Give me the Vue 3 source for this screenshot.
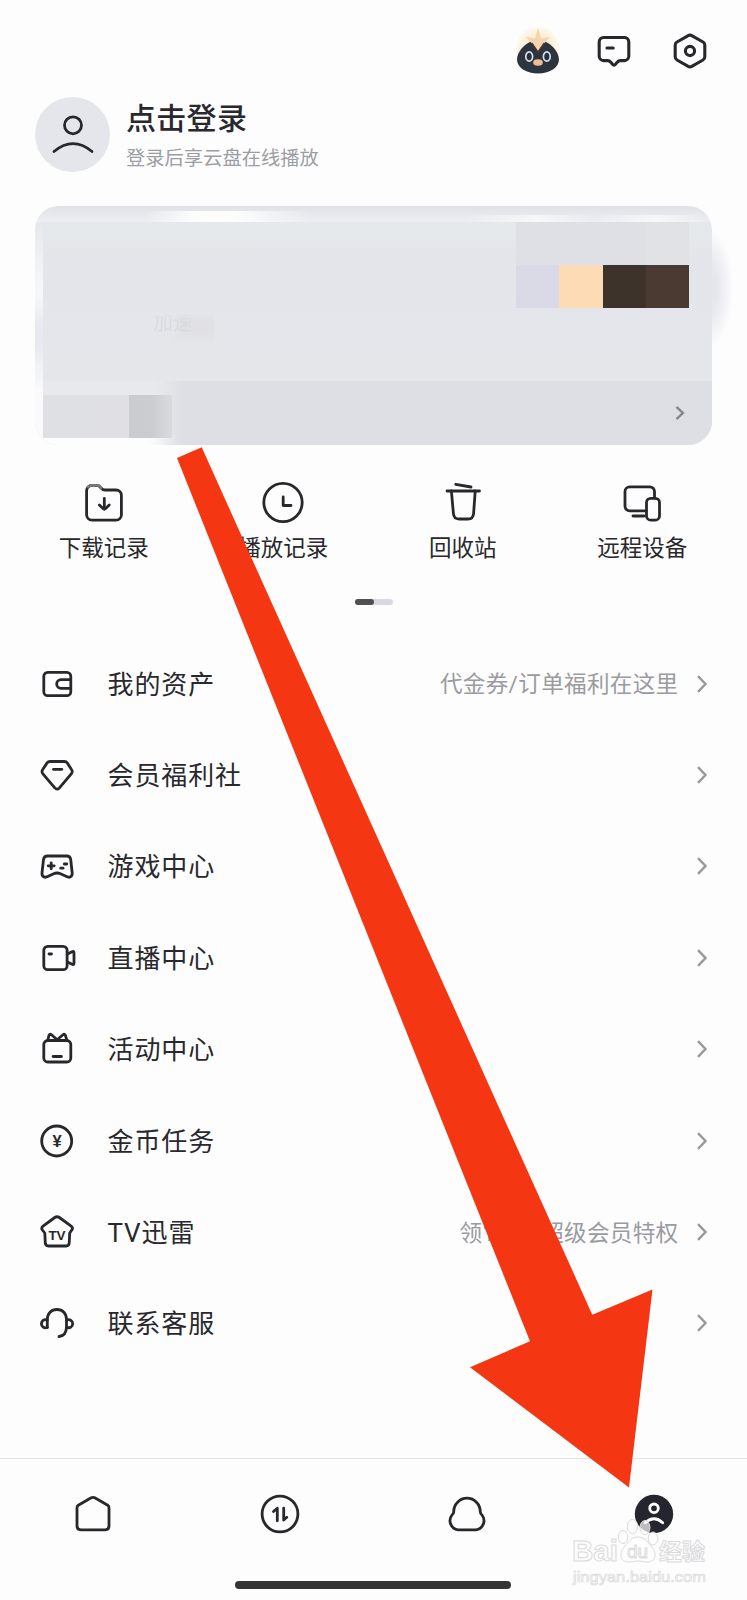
<!--
  个人中心页面
  结构：顶部工具栏 / 登录信息 / 会员卡片 / 快捷入口 / 菜单列表 / 底部导航
  所有图标的坐标原点都在图标中心，线条数据统一放在 icons 里
-->
<template>
  <div class="page">
    <!-- 顶部工具栏 -->
    <header class="toolbar">
      <svg class="penguin" viewBox="-24 -26 48 52">
        <defs>
          <radialGradient id="halo">
            <stop offset=".7" stop-color="#fcf0d8" />
            <stop offset="1" stop-color="#fdfaf3" />
          </radialGradient>
        </defs>
        <circle cx="0" cy="-2" r="22" fill="url(#halo)" />
        <path d="M-21 8.500C-21 1-13-8-6.500-9.500L0-2 6.500-9.500C13-8 21 1 21 8.500C21 17 11 22.500 0 22.500S-21 17-21 8.500z" fill="#2d343e" />
        <path d="M-12-14L-3-12.500 0-23 3-12.500 12-14 5.500-7 0 0-5.500-7z" fill="#f6d3ac" />
        <path d="M-6-8L0 1 6-8" fill="none" stroke="#4a3d35" stroke-width="1.3" />
        <ellipse cx="-8.800" cy="5.500" rx="3.400" ry="4.600" fill="#26303c" stroke="#d5e0ec" stroke-width="1.700" />
        <ellipse cx="8.800" cy="5.500" rx="3.400" ry="4.600" fill="#26303c" stroke="#d5e0ec" stroke-width="1.700" />
        <ellipse cx="0" cy="11.500" rx="4.800" ry="3.200" fill="#efbd95" />
      </svg>
      <svg class="icon bold" viewBox="-24 -24 48 48"><path v-for="d in icons.chat" :key="d" :d="d" /></svg>
      <svg class="icon bold" viewBox="-24 -24 48 48"><path v-for="d in icons.setting" :key="d" :d="d" /></svg>
    </header>

    <!-- 登录信息 -->
    <section class="profile">
      <div class="avatar">
        <svg class="icon" viewBox="-24 -24 48 48"><path v-for="d in icons.avatar" :key="d" :d="d" /></svg>
      </div>
      <div class="profile-text">
        <h1>点击登录</h1>
        <p>登录后享云盘在线播放</p>
      </div>
    </section>

    <!-- 会员卡片 -->
    <section class="card">
      <div class="card-glow"></div>
      <div class="card-inner">
        <div class="card-main">
          <span class="ghost">加速</span>
          <div class="mosaic">
            <i v-for="c in mosaic" :key="c" :style="{ background: c }"></i>
          </div>
        </div>
        <div class="card-foot">
          <div class="foot-blocks"><i></i><i></i><i></i></div>
          <svg class="chevron" viewBox="0 0 12 18"><path d="M2.500 2.800L8.900 9 2.500 15.200" /></svg>
        </div>
      </div>
    </section>

    <!-- 快捷入口 -->
    <nav class="quick">
      <div v-for="q in quicks" :key="q.label" class="quick-item">
        <svg class="icon" viewBox="-24 -24 48 48">
          <path v-for="d in icons[q.icon]" :key="d" :d="d" />
          <path v-if="q.icon === 'download'" class="faded" d="M-16-16A5 5 0 0 1-12-17.600H-7Q-4.500-17.600-3-15" />
        </svg>
        <span>{{ q.label }}</span>
      </div>
    </nav>
    <div class="pager"><i></i></div>

    <!-- 菜单列表 -->
    <ul class="menu">
      <li v-for="m in menus" :key="m.label">
        <svg class="icon" viewBox="-24 -24 48 48">
          <path v-for="d in icons[m.icon]" :key="d" :d="d" />
          <text v-if="m.mark" x="0" :y="m.markY" :font-size="m.markSize">{{ m.mark }}</text>
        </svg>
        <span class="menu-label">{{ m.label }}</span>
        <span class="menu-tip">{{ m.tip }}</span>
        <svg class="chevron" viewBox="0 0 12 18"><path d="M2 1.200L9.500 9 2 16.800" /></svg>
      </li>
    </ul>

    <!-- 底部导航 -->
    <footer class="tabbar">
      <div v-for="t in tabs" :key="t" class="tab">
        <svg v-if="t !== 'mine'" class="icon" viewBox="-24 -24 48 48">
          <path v-for="d in icons[t]" :key="d" :d="d" />
        </svg>
        <svg v-else class="icon mine" viewBox="-24 -24 48 48">
          <circle r="19.200" />
          <path v-for="d in icons.mine" :key="d" :d="d" />
        </svg>
      </div>
    </footer>
    <div class="home-bar"></div>

    <!-- 指引箭头 -->
    <svg class="arrow" viewBox="0 0 747 1600">
      <path d="M177 458L201.700 447.300 592.300 1314.700 652.500 1289.500 629 1487.500 470 1367.300 530 1341.300z" />
    </svg>

    <!-- 水印 -->
    <svg class="watermark" viewBox="0 0 150 80">
      <g class="paw">
        <path d="M57 25c6 0 9 4 13 9 6 6 6 16-4 16-4 0-6-1-9-1s-5 1-9 1c-10 0-10-10-4-16 4-5 7-9 13-9z" />
        <ellipse cx="42" cy="25" rx="4.800" ry="6.500" />
        <ellipse cx="51.500" cy="14.500" rx="5.200" ry="7" />
        <ellipse cx="64" cy="15.500" rx="5" ry="7" class="toe" />
        <ellipse cx="72" cy="26.500" rx="4.800" ry="6.500" />
      </g>
      <text x="-9" y="48.500" font-size="29" textLength="46" lengthAdjust="spacingAndGlyphs">Bai</text>
      <text x="46" y="46" font-size="19" class="du">du</text>
      <text x="78" y="47.500" font-size="23">经验</text>
      <text x="-8" y="69.500" font-size="15" textLength="133" lengthAdjust="spacingAndGlyphs" class="url">jingyan.baidu.com</text>
    </svg>
  </div>
</template>

<script setup>
// 卡片右上角的色块
const mosaic = ['#d9dae5', '#fddcb5', '#3e332b', '#4b3a32']

// 图标线条
const icons = {
  chat: [
    'M-10.500-13.500H10.500A4.500 4.500 0 0 1 14.800-9V5.200A4.500 4.500 0 0 1 10.500 9.600H6.500Q4.500 9.600 3 11.400L1.500 13.300Q0 15-1.500 13.300L-3 11.400Q-4.500 9.600-6.500 9.600H-10.500A4.500 4.500 0 0 1-14.800 5.200V-9A4.500 4.500 0 0 1-10.500-13.500z',
    'M-7-3H-.8'
  ],
  setting: [
    'M-2.200-15.200Q0-16.600 2.200-15.200L13-9Q14.800-8 14.800-5.800V5.800Q14.800 8 13 9L2.200 15.200Q0 16.600-2.200 15.200L-13 9Q-14.800 8-14.800 5.800V-5.800Q-14.800-8-13-9z',
    'M-4.600 0A4.600 4.600 0 1 1 4.600 0A4.600 4.600 0 1 1-4.600 0z'
  ],
  avatar: ['M-8.500-9.700A8.500 8.500 0 1 1 8.500-9.700A8.500 8.500 0 1 1-8.500-9.700z', 'M-19 16.500Q0 .8 19 16.500'],
  download: [
    'M-12-17.600H-7C-3-17.600-3.500-13 1-13H12A5.400 5.400 0 0 1 17.400-7.600V11.800A5.400 5.400 0 0 1 12 17.200H-12A5.400 5.400 0 0 1-17.400 11.800V-12.200A5.400 5.400 0 0 1-12-17.600z',
    'M.3-4.500V6',
    'M-4.600 2L-1 5.500Q.3 6.600 1.600 5.500L5.200 2'
  ],
  history: ['M-19.200-.5A19.200 19.200 0 1 1 19.200-.5A19.200 19.200 0 1 1-19.200-.5z', 'M.2-6V2.500H8'],
  trash: ['M-7.300-18.700L8-16', 'M-16-12H16.500', 'M-11.600-12L-9.600 10.500Q-9.200 16-4 16H5Q10.200 16 10.600 10.500L12.200-12'],
  device: [
    'M12.500-5V-11.500A4.700 4.700 0 0 0 7.800-16.200H-12.300A4.700 4.700 0 0 0-17-11.500V3.200A4.700 4.700 0 0 0-12.300 7.900H4',
    'M8.700-4.700H13.300A4.200 4.200 0 0 1 17.500-.5V12.900A4.200 4.200 0 0 1 13.300 17.100H8.700A4.200 4.200 0 0 1 4.500 12.900V-.5A4.200 4.200 0 0 1 8.700-4.700z',
    'M-9 13H2'
  ],
  wallet: [
    'M-9.200-11.700H9.800A4 4 0 0 1 13.800-7.700V7.700A4 4 0 0 1 9.800 11.700H-9.200A4 4 0 0 1-13.200 7.700V-7.700A4 4 0 0 1-9.200-11.700z',
    'M13.500-4.300H4A4.300 4.300 0 0 0 4 4.300H13.500'
  ],
  diamond: [
    'M-7-13.500H7.500A3.500 3.500 0 0 1 10.300-12.100L14.500-5.500Q16-3.300 14.300-1.200L2.400 12.900Q0 15.200-2.200 12.900L-14.100-1.200Q-15.800-3.300-14.300-5.500L-9.900-12.100A3.500 3.500 0 0 1-7-13.500z',
    'M-3.500-5.700H4.700'
  ],
  game: [
    'M-9.500-10H9.700A4 4 0 0 1 13.700-6.500L15.200 7C15.500 10.500 12.500 12.200 9.500 10.600L3.500 7.700Q0 6.300-3.300 7.700L-9.300 10.600C-12.300 12.200-15.300 10.500-15 7L-13.500-6.500A4 4 0 0 1-9.500-10z',
    'M-8.800-.2H-2.800',
    'M-5.800-3.200V2.800',
    'M7.300-2H9.800',
    'M3.800 2.200H6'
  ],
  live: [
    'M-9.200-11.700H6.100A4 4 0 0 1 10.100-7.700V7.700A4 4 0 0 1 6.100 11.700H-9.200A4 4 0 0 1-13.200 7.700V-7.700A4 4 0 0 1-9.200-11.700z',
    'M10.500-4L15-6.300Q17-7 17-5.300V5.300Q17 7 15 6.300L10.500 4',
    'M-8-4H-5.500'
  ],
  gift: [
    'M-9.200-8.500H9.800A4 4 0 0 1 13.800-4.500V9A4 4 0 0 1 9.800 13H-9.200A4 4 0 0 1-13.200 9V-4.500A4 4 0 0 1-9.200-8.500z',
    'M-9.200-9L-8-13.700Q-7.200-15.500-5.500-14.200L.2-9.200 5.900-14.200Q7.600-15.500 8.400-13.700L9.800-9',
    'M-3.800 7.500H4.400'
  ],
  coin: ['M-15.300 0A15 15 0 1 1 14.700 0A15 15 0 1 1-15.300 0z'],
  tv: [
    'M-2.200-14.500Q0-16 2.400-14.500L14.500-5.600Q16.300-3.800 14.800-2L12.700 1 12.200 11.200Q12 14 9.200 14H-8.500Q-11.500 14-11.700 11.200L-12.200 1-14.600-2Q-16-3.800-14.300-5.600z'
  ],
  service: [
    'M-9.700 4.500V-3.500C-9.700-9.500-5.700-13.500 0-13.500S9.500-9.500 9.500-3.500V3.500C9.500 9 7 13 2 13.500',
    'M-9.700-3C-13-4.200-15.600-2-15.600 .8S-13 5.600-9.700 4.500',
    'M9.500-3C13-4.200 15.700-2 15.700 .8S13 5.600 9.500 4.300'
  ],
  home: ['M-1.800-16.200Q0-17.200 1.800-16.200L14.700-8.800Q16-8 16-6.200V12Q16 15.800 12.200 15.800H-12.200Q-16 15.800-16 12V-6.200Q-16-8-14.700-8.800z'],
  transfer: [
    'M-17.900 0A17.900 17.900 0 1 1 17.900 0A17.900 17.900 0 1 1-17.900 0z',
    'M-6.500-2.500L-2.700-5.800V6.800',
    'M6.800 3.300L3.700 6V-5.800'
  ],
  cloud: [
    'M-13.300-2.300A13.300 13.500 0 0 1 13.300-2.300Q13.300-.5 15 1A9.200 9.200 0 0 1 9 15.800H-9A9.200 9.200 0 0 1-15 1Q-13.300-.5-13.300-2.300z'
  ],
  mine: ['M-4.300-5.700A4.300 4.300 0 1 1 4.300-5.700A4.300 4.300 0 1 1-4.300-5.700z', 'M-8.700 8.700Q0 .8 8.700 8.700']
}

const quicks = [
  { icon: 'download', label: '下载记录' },
  { icon: 'history', label: '播放记录' },
  { icon: 'trash', label: '回收站' },
  { icon: 'device', label: '远程设备' }
]

const menus = [
  { icon: 'wallet', label: '我的资产', tip: '代金券/订单福利在这里' },
  { icon: 'diamond', label: '会员福利社' },
  { icon: 'game', label: '游戏中心' },
  { icon: 'live', label: '直播中心' },
  { icon: 'gift', label: '活动中心' },
  { icon: 'coin', label: '金币任务', mark: '¥', markY: 5.8, markSize: 16.5 },
  { icon: 'tv', label: 'TV迅雷', tip: '领1个月超级会员特权', mark: 'TV', markY: 7.5, markSize: 13.5 },
  { icon: 'service', label: '联系客服' }
]

const tabs = ['home', 'transfer', 'cloud', 'mine']
</script>

<style>
body {
  margin: 0;
  background: #fdfdfd;
}
</style>

<style scoped>
.page {
  position: relative;
  display: flex;
  flex-direction: column;
  width: 747px;
  height: 1600px;
  overflow: hidden;
  background: #fdfdfd;
  color: #29292d;
  font-family: "Noto Sans CJK SC", sans-serif;
}
.icon {
  display: block;
  flex: none;
  width: 48px;
  height: 48px;
  fill: none;
  stroke: #28282c;
  stroke-width: 2.8;
  stroke-linecap: round;
  stroke-linejoin: round;
}
.icon.bold {
  stroke-width: 3.1;
}
.icon text {
  fill: #28282c;
  stroke: none;
  font-family: "Liberation Sans", sans-serif;
  font-weight: bold;
  text-anchor: middle;
}
.icon .faded {
  stroke: #77777a;
}
.chevron {
  flex: none;
  width: 12px;
  height: 18px;
  fill: none;
  stroke: #98989d;
  stroke-width: 2.4;
}

/* 顶部工具栏 */
.toolbar {
  display: flex;
  justify-content: flex-end;
  align-items: center;
  gap: 28px;
  height: 50px;
  padding: 26px 33px 0 0;
}
.penguin {
  width: 48px;
  height: 52px;
}

/* 登录信息 */
.profile {
  display: flex;
  gap: 16px;
  height: 75px;
  padding: 21px 0 0 35px;
}
.avatar {
  display: flex;
  align-items: center;
  justify-content: center;
  width: 75px;
  height: 75px;
  border-radius: 50%;
  background: #e5e6eb;
}
.profile-text h1 {
  margin: 0;
  font-size: 30px;
  font-weight: 500;
  line-height: 38px;
  letter-spacing: .3px;
}
.profile-text p {
  margin: 8px 0 0;
  color: #9c9da3;
  font-size: 19.3px;
  line-height: 28px;
}

/* 会员卡片 */
.card {
  position: relative;
  height: 239px;
  margin: 34px 35px 0;
}
.card-glow {
  position: absolute;
  top: 20px;
  right: -22px;
  width: 56px;
  height: 124px;
  border-radius: 50%;
  background: radial-gradient(closest-side, #e6e7ee 40%, #fdfdfd);
}
.card-inner {
  position: relative;
  display: flex;
  flex-direction: column;
  height: 100%;
  border-radius: 24px;
  overflow: hidden;
  background:
    linear-gradient(90deg, transparent 110px, rgba(255, 255, 255, .9) 160px, rgba(255, 255, 255, .9) 200px, transparent 275px) 0 5px / 100% 11px no-repeat,
    linear-gradient(90deg, transparent 430px, rgba(255, 255, 255, .6) 500px, transparent 560px, rgba(255, 255, 255, .6) 620px, transparent 670px) 0 9px / 100% 7px no-repeat,
    linear-gradient(#e0e2e8, #edeef3 16px, transparent 16px),
    linear-gradient(#e5e9ec 16px, #e4e5ea 50px, #e6e7eb);
}
.card-inner::before {
  content: "";
  position: absolute;
  top: 20px;
  bottom: 0;
  left: 0;
  width: 8px;
  background: linear-gradient(#e7e9ed, #f8f8fc 30%, #e9eaf0 45%, #e9eaf0 55%, #fafafd 75%);
}
.card-main {
  display: flex;
  justify-content: space-between;
  height: 175px;
}
/* 几乎看不清的残留文字 */
.ghost {
  width: 61px;
  height: 36px;
  margin: 102px 0 0 118px;
  background: linear-gradient(90deg, transparent 20px, #e1e0e5 28px);
  color: #d9dadf;
  font-size: 20px;
  line-height: 28px;
  -webkit-mask-image: linear-gradient(transparent 15%, #000 35%, #000 65%, transparent);
  mask-image: linear-gradient(transparent 15%, #000 35%, #000 65%, transparent);
}
.mosaic {
  display: flex;
  align-self: flex-start;
  width: 173px;
  height: 43px;
  margin: 16px 23px 0 0;
  padding-top: 43px;
  background: linear-gradient(90deg, #dfe0e6 129px, #e1e2e6 129px);
}
.mosaic i {
  flex: 1;
  height: 43px;
}
.card-foot {
  display: flex;
  justify-content: space-between;
  align-items: center;
  height: 64px;
  padding-right: 26px;
  background:
    linear-gradient(90deg, #fdfdfd 112px, rgba(253, 253, 253, 0) 142px) 0 100% / 100% 8px no-repeat,
    linear-gradient(90deg, #e8e9ed 120px, #dedfe4 150px);
}
.foot-blocks {
  display: flex;
  height: 43px;
  padding: 14px 0 7px 8px;
}
.foot-blocks i {
  width: 43px;
  background: #dfe0e4;
}
.foot-blocks i:nth-child(2) {
  background: #e0dfe3;
}
.foot-blocks i:nth-child(3) {
  background: linear-gradient(90deg, #cacccf 50%, #d8dade);
}
.card .chevron {
  stroke: #85868c;
}

/* 快捷入口 */
.quick {
  display: flex;
  padding: 34px 15px 0 14px;
}
.quick-item {
  display: flex;
  flex: 1;
  flex-direction: column;
  align-items: center;
  font-size: 22.5px;
  line-height: 32px;
}
.quick-item span {
  margin-top: 3px;
}
.pager {
  width: 38px;
  height: 6px;
  margin: 37px 0 0 355px;
  border-radius: 3px;
  background: #d8d9e0;
}
.pager i {
  display: block;
  width: 19px;
  height: 6px;
  border-radius: 3px;
  background: #505053;
}

/* 菜单列表 */
.menu {
  margin: 33px 0 0;
  padding: 0 39px 0 32.500px;
  list-style: none;
}
.menu li {
  display: flex;
  align-items: center;
  height: 91.4px;
}
.menu-label {
  margin: 0 0 3px 27px;
  font-family: Roboto, "Noto Sans CJK SC", sans-serif;
  font-size: 26px;
  letter-spacing: .9px;
}
.menu-tip {
  flex: 1;
  margin: 0 17.5px 2px 0;
  color: #9a9ba0;
  font-family: Roboto, "Noto Sans CJK SC", sans-serif;
  font-size: 22.6px;
  letter-spacing: .3px;
  text-align: right;
}

/* 底部导航 */
.tabbar {
  display: flex;
  height: 111px;
  margin-top: 88.600px;
  border-top: 1px solid #e4e4e6;
}
.tab {
  display: flex;
  flex: 1;
  justify-content: center;
  align-items: center;
}
.mine circle {
  fill: #25252d;
  stroke: none;
}
.mine path {
  stroke: #fff;
}
.home-bar {
  width: 276px;
  height: 8px;
  margin: 11px 0 0 235px;
  border-radius: 4px;
  background: #353537;
}

/* 指引箭头 */
.arrow {
  position: absolute;
  top: 0;
  left: 0;
  width: 747px;
  height: 1600px;
  fill: #f43612;
}

/* 水印 */
.watermark {
  position: absolute;
  top: 1512px;
  left: 581px;
  width: 150px;
  height: 80px;
  overflow: visible;
  fill: #fdfdfd;
  stroke: #dadadc;
  stroke-width: 1;
  font-family: "Liberation Sans", "Noto Sans CJK SC", sans-serif;
  font-weight: bold;
}
.watermark .paw {
  fill: rgba(253, 253, 253, .85);
}
.watermark .toe {
  fill: rgba(253, 253, 253, .7);
}
.watermark .du {
  font-weight: normal;
}
.watermark .url {
  stroke-width: .7;
  font-weight: normal;
}
</style>
